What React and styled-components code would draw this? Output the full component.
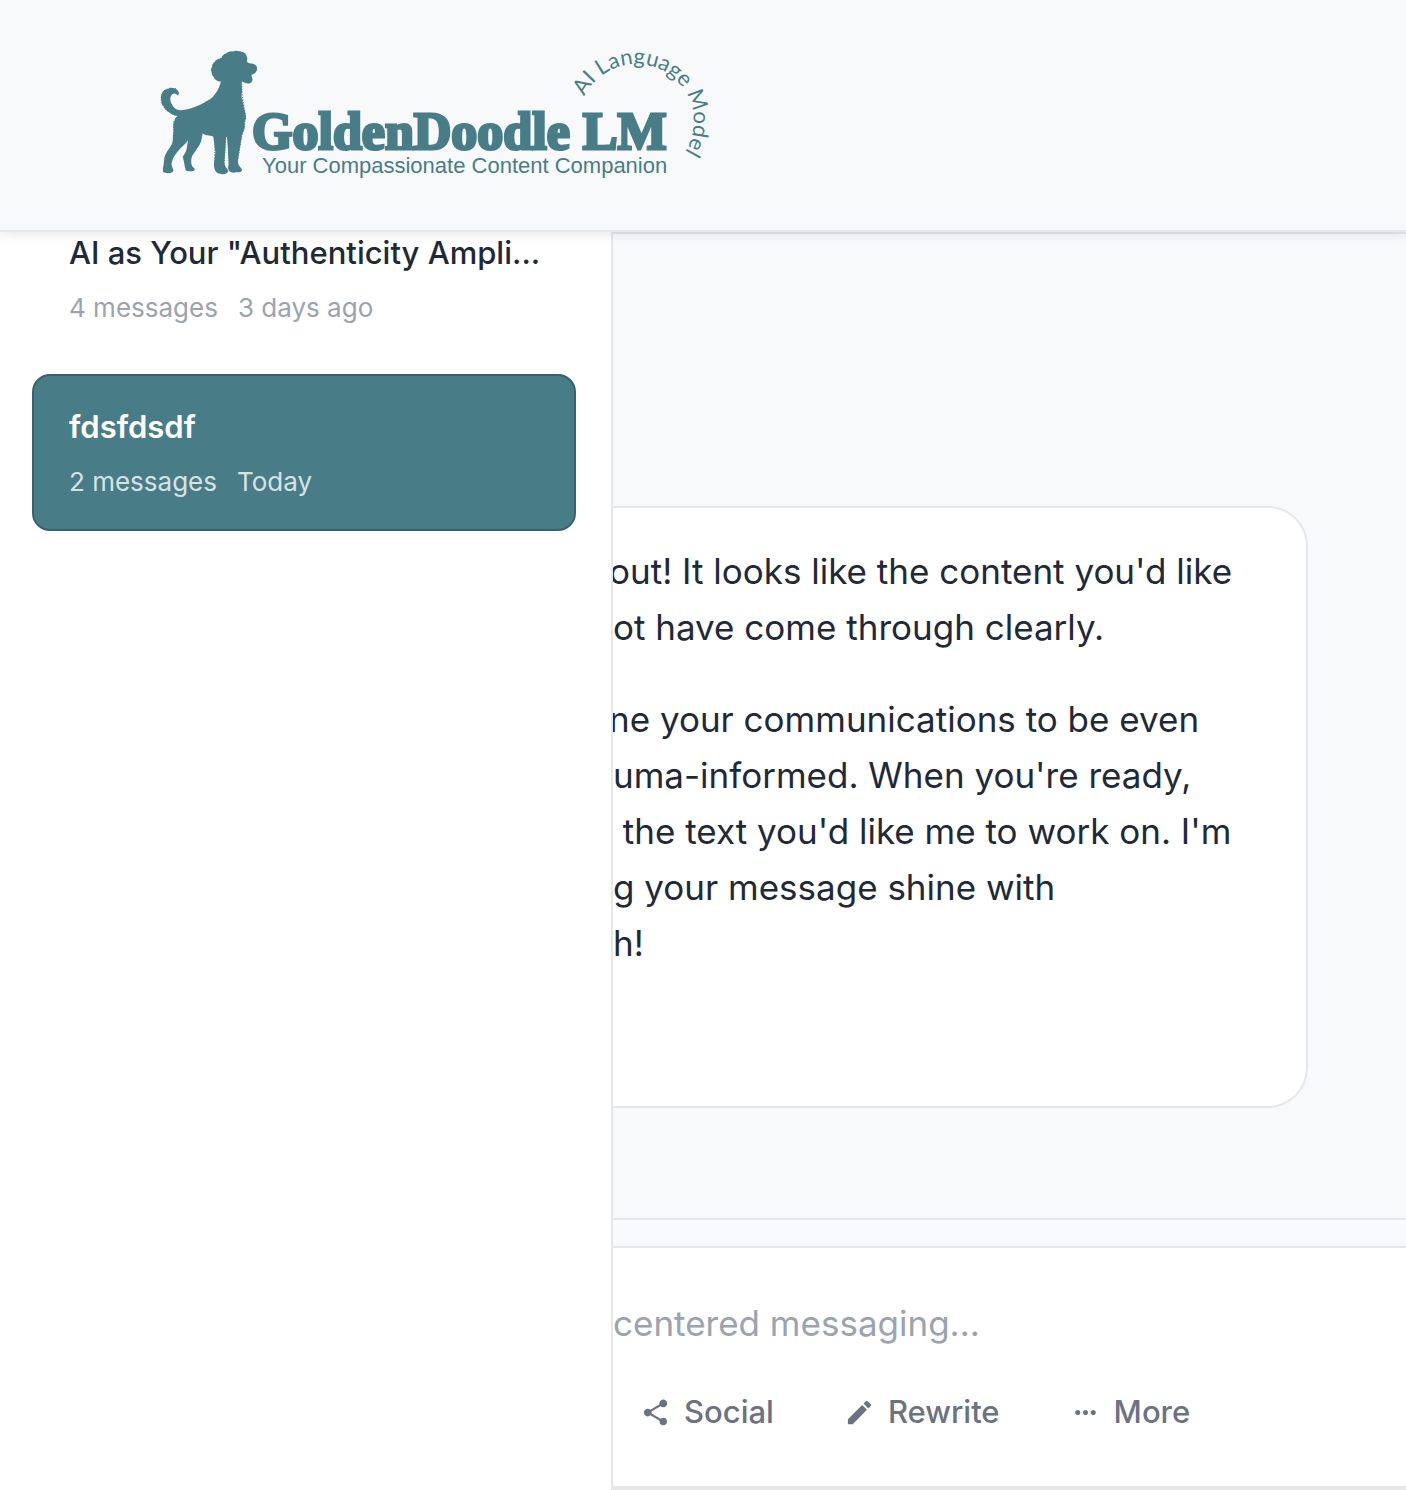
import React from "react";
import styled, { createGlobalStyle } from "styled-components";
import { MdEdit, MdMoreHoriz, MdShare } from "react-icons/md";

const color = {
  teal: "#487d88",
  tealDark: "#35626c",
  page: "#f8f9fb",
  surface: "#ffffff",
  line: "#e5e7eb",
  ink: "#1f2937",
  muted: "#6b7280",
  faint: "#9ca3af",
};

const GlobalStyle = createGlobalStyle`
  *, *::before, *::after { box-sizing: border-box; }
  body {
    margin: 0;
    background: ${color.page};
    color: ${color.ink};
    font-family: Inter, "Liberation Sans", sans-serif;
    -webkit-font-smoothing: antialiased;
  }
`;

const Page = styled.div`
  display: flex;
  flex-direction: column;
  min-height: 100vh;
`;

const Header = styled.header`
  position: relative;
  z-index: 2;
  padding: 40px 150px;
  background: ${color.page};
  border-bottom: 2px solid ${color.line};
  box-shadow: 0 2px 12px rgba(0, 0, 0, 0.1);
`;

const HomeLink = styled.a`
  display: inline-block;
  vertical-align: top;
`;

const LogoArt = styled.svg`
  display: block;
  width: 570px;
  height: 150px;
  fill: ${color.teal};
`;

const Wordmark = styled.text`
  font: 700 52px "Liberation Serif", serif;
  stroke: ${color.teal};
  stroke-width: 3px;
`;

const Tagline = styled.text`
  font: 400 22px "Liberation Sans", sans-serif;
`;

const ArcText = styled.text`
  font: 400 22px Lato, sans-serif;
`;

const Body = styled.div`
  flex: 1;
  display: grid;
  grid-template-columns: 613px minmax(0, 1fr);
`;

const Sidebar = styled.aside`
  overflow: hidden;
  padding: 0 35px 0 32px;
  background: ${color.surface};
  border-right: 2px solid ${color.line};
`;

const ChatList = styled.nav`
  display: flex;
  flex-direction: column;
  gap: 17px;
  margin-top: -32px;
`;

const ChatItem = styled.button`
  display: flex;
  flex-direction: column;
  gap: 15px;
  padding: 30px 35px 29px;
  border: 2px solid ${(p) => (p.$active ? color.tealDark : "transparent")};
  border-radius: 18px;
  background: ${(p) => (p.$active ? color.teal : "transparent")};
  color: ${(p) => (p.$active ? "#ffffff" : color.ink)};
  font-family: inherit;
  text-align: left;
  cursor: pointer;
`;

const ChatTitle = styled.span`
  font-size: 31px;
  font-weight: ${(p) => (p.$active ? 600 : 500)};
  line-height: 42px;
  white-space: nowrap;
`;

const ChatMeta = styled.span`
  display: flex;
  gap: 20px;
  color: ${(p) => (p.$active ? "rgba(255, 255, 255, 0.8)" : color.faint)};
  font-size: 26px;
  line-height: 37px;
`;

const Main = styled.main`
  display: flex;
  flex-direction: column;
  overflow: hidden;
  border-top: 2px solid ${color.line};
`;

const Conversation = styled.section`
  flex: 1;
  display: flex;
  flex-direction: column;
  justify-content: flex-end;
  padding: 36px 98px 110px 0;
`;

const Message = styled.article`
  display: flex;
  flex-direction: column;
  gap: 36px;
  padding: 35px 36px 135px 0;
  overflow: hidden;
  background: ${color.surface};
  border: 2px solid ${color.line};
  border-left: 0;
  border-radius: 0 40px 40px 0;
`;

const Paragraph = styled.p`
  margin: 0;
  font-size: 35px;
  line-height: 56px;
  text-indent: -4px;
  white-space: pre;
`;

const ComposerArea = styled.section`
  padding-top: 26px;
  border-top: 2px solid ${color.line};
  background: #f9fafb;
`;

const Composer = styled.form`
  display: flex;
  flex-direction: column;
  gap: 29px;
  padding: 47px 0 42px;
  background: ${color.surface};
  border-top: 2px solid ${color.line};
  border-bottom: 4px solid ${color.line};
  box-shadow: 0 0 8px rgba(0, 0, 0, 0.04);
`;

const Prompt = styled.input`
  width: 100%;
  height: 56px;
  padding: 0;
  border: 0;
  outline: 0;
  background: transparent;
  color: ${color.ink};
  font: 400 35px Inter, sans-serif;

  &::placeholder {
    color: ${color.faint};
    opacity: 1;
  }
`;

const Tools = styled.div`
  display: flex;
  gap: 16px;
`;

const Tool = styled.button`
  display: flex;
  align-items: center;
  gap: 13px;
  padding: 8px 27px;
  border: 0;
  background: transparent;
  color: ${color.muted};
  font: 500 31px/48px Inter, sans-serif;
  cursor: pointer;
`;

const Logo = () => (
  <LogoArt viewBox="0 0 570 150" role="img" aria-label="GoldenDoodle LM">
    <g transform="scale(0.33333)">
      <path d="M212 124C202 126 194 118 191 111C184 106 186 100 184 94C181 87 186 84 187 79C186 72 193 68 197 63C202 55 210 57 215 54C216 44 226 42 231 38C240 32 248 36 254 33C262 31 268 36 276 35C284 37 290 44 291 52C293 58 290 63 292 67C300 73 308 69 315 74C323 78 320 84 321 89C319 98 312 102 305 104C302 109 310 114 307 122C304 130 296 131 290 130C284 130 280 124 276 125C272 136 279 149 275 162C273 176 279 184 280 194C281 207 287 216 288 231C288 240 281 246 284 257C286 270 276 278 275 292L269 327C266 345 262 360 265 372C268 382 276 383 276 391C273 400 259 396 251 398C240 398 235 392 234 384L236 370L234 332L231 291L228 291L226 330L223 367C224 384 236 386 234 396C228 405 211 403 204 400C193 393 192 382 192 372L196 336L190 290C178 285 164 288 158 280C155 292 156 302 149 314L132 340C123 350 122 363 125 375C127 383 136 384 134 391C126 396 111 394 107 391C103 377 103 365 98 350C103 343 108 337 110 326L114 301C106 314 92 323 82 336C72 347 68 356 65 369C63 380 71 385 70 393C65 402 48 400 40 397C36 390 42 373 42 363C43 345 53 333 62 319C71 305 67 293 70 281C72 268 67 255 73 244C74 235 79 229 84 228C71 227 62 220 55 215C45 211 43 203 39 196C32 190 36 182 33 175C32 165 38 160 39 154C47 145 54 149 60 143C69 143 80 145 84 153C89 158 86 164 84 167C76 158 68 159 63 168C58 177 62 190 70 200C77 209 88 212 98 210C126 208 155 193 180 178C192 171 210 145 212 124Z" />
      <path
        d="M84 227C46 216 32 193 34 170C37 150 56 143 76 147M275 132L276 168L286 224L282 263L274 290L264 355M238 370L235 298M222 370L226 298M195 370L195 298M72 245L71 290M187 84C188 69 200 58 215 55C223 39 250 32 275 37"
        fill="none"
        stroke={color.teal}
        strokeWidth="4"
        strokeLinecap="round"
        strokeDasharray="1 7"
      />
    </g>
    <Wordmark x="102" y="109">GoldenDoodle LM</Wordmark>
    <Tagline x="112" y="133">Your Compassionate Content Companion</Tagline>
    <path id="logo-arc" d="M434.5 56.4A57.5 57.5 0 1 1 525 124" fill="none" />
    <ArcText>
      <textPath href="#logo-arc">AI Language Model</textPath>
    </ArcText>
  </LogoArt>
);

const chats = [
  { title: 'AI as Your "Authenticity Ampli...', count: "4 messages", when: "3 days ago" },
  { title: "fdsfdsdf", count: "2 messages", when: "Today", active: true },
];

const paragraphs = [
  ["out! It looks like the content you'd like", "ot have come through clearly."],
  [
    "ne your communications to be even",
    "uma-informed. When you're ready,",
    " the text you'd like me to work on. I'm",
    "g your message shine with",
    "h!",
  ],
];

const tools = [
  { label: "Social", Icon: MdShare },
  { label: "Rewrite", Icon: MdEdit },
  { label: "More", Icon: MdMoreHoriz },
];

export default function App() {
  return (
    <Page>
      <GlobalStyle />
      <Header>
        <HomeLink href="#">
          <Logo />
        </HomeLink>
      </Header>
      <Body>
        <Sidebar>
          <ChatList aria-label="Conversations">
            {chats.map((c) => (
              <ChatItem key={c.title} type="button" $active={c.active}>
                <ChatTitle $active={c.active}>{c.title}</ChatTitle>
                <ChatMeta $active={c.active}>
                  <span>{c.count}</span>
                  <span>{c.when}</span>
                </ChatMeta>
              </ChatItem>
            ))}
          </ChatList>
        </Sidebar>
        <Main>
          <Conversation>
            <Message>
              {paragraphs.map((lines) => (
                <Paragraph key={lines[0]}>{lines.join("\n")}</Paragraph>
              ))}
            </Message>
          </Conversation>
          <ComposerArea>
            <Composer onSubmit={(e) => e.preventDefault()}>
              <Prompt type="text" aria-label="Message" placeholder="centered messaging..." />
              <Tools>
                {tools.map(({ label, Icon }) => (
                  <Tool key={label} type="button">
                    <Icon size={31} aria-hidden="true" />
                    {label}
                  </Tool>
                ))}
              </Tools>
            </Composer>
          </ComposerArea>
        </Main>
      </Body>
    </Page>
  );
}
